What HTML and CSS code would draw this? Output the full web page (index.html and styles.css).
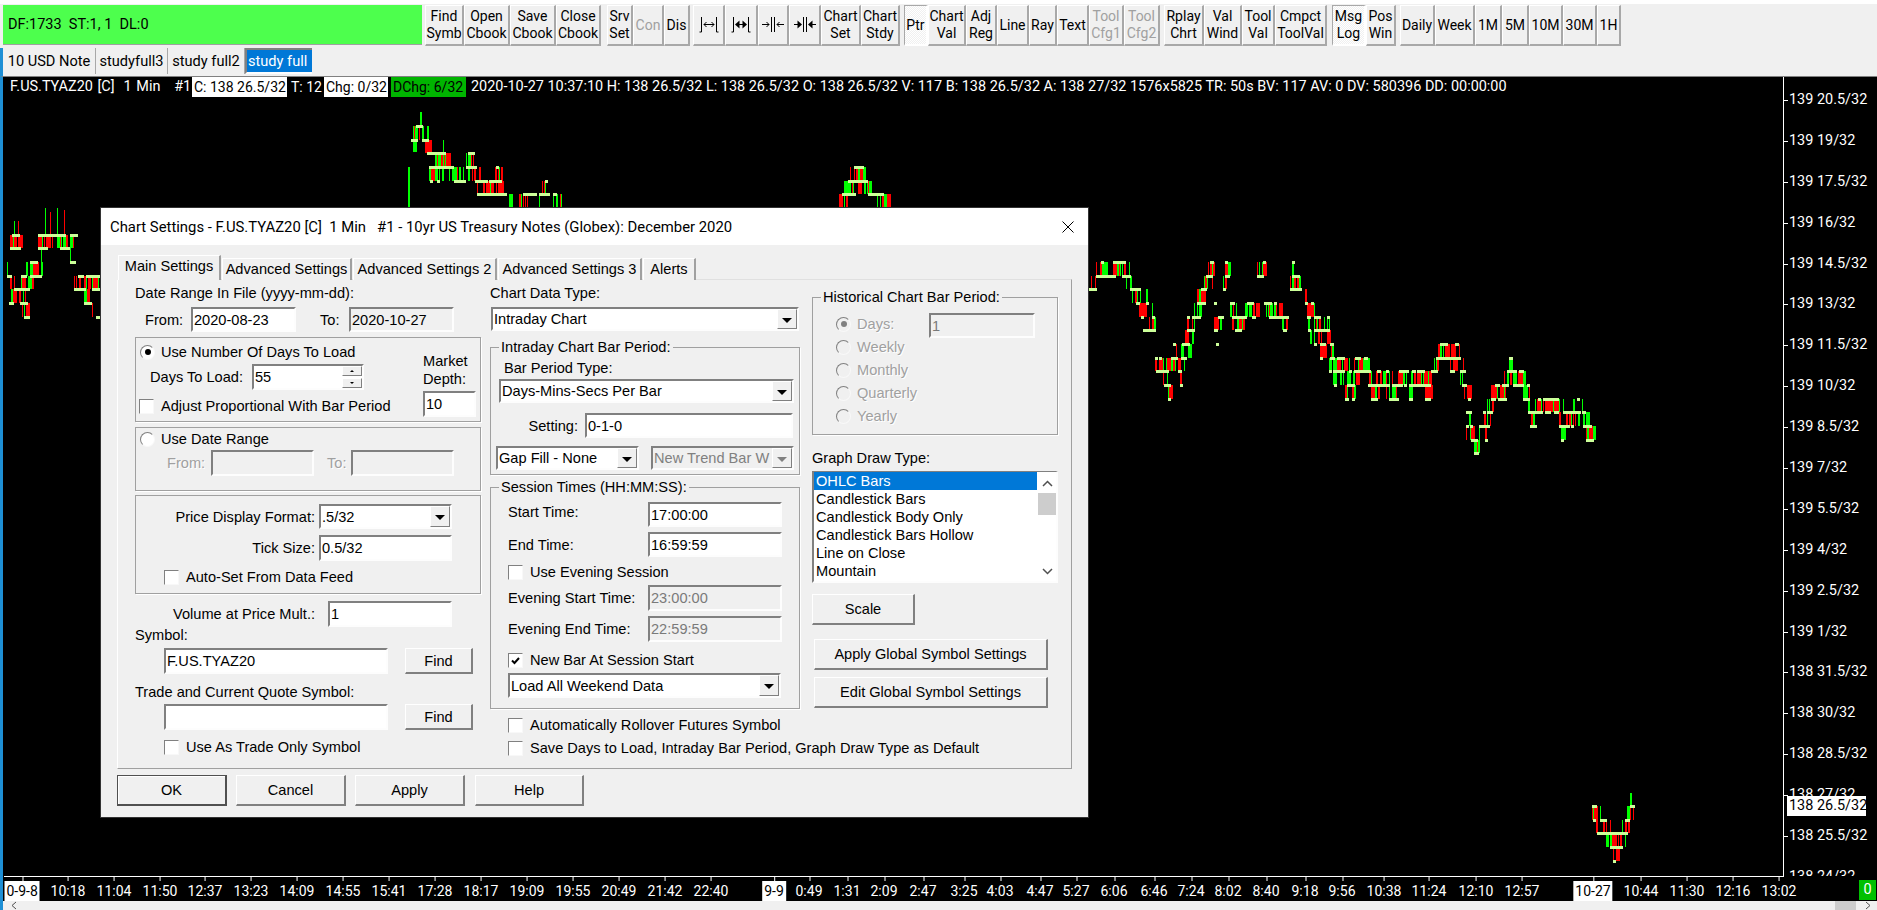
FILE: index.html
```html
<!DOCTYPE html>
<html lang="en">
<head>
<meta charset="utf-8">
<title>Chart Settings</title>
<link rel="stylesheet" href="styles.css">
</head>
<body>
<div class="app">
  <div class="top-strip"></div>
  <div class="toolbar">
    <div class="status-box">DF:1733&nbsp; ST:1, 1&nbsp; DL:0</div>
    <div class="tb-group g3">
      <div class="tb w39">Find<br>Symb</div><div class="tb w46">Open<br>Cbook</div><div class="tb w46">Save<br>Cbook</div><div class="tb w45">Close<br>Cbook</div>
    </div>
    <div class="tb-group g6">
      <div class="tb w26">Srv<br>Set</div><div class="tb w31 off">Con</div><div class="tb w26">Dis</div>
    </div>
    <div class="tb-group g3">
      <div class="tb w32"><svg class="ico" viewBox="0 0 24 20"><path d="M4.500 2V17M2.500 17H4.500M19.500 2V17M19.500 17H21.500M7 9.500H17M9.500 7L7 9.500L9.500 12M14.500 7L17 9.500L14.500 12"/></svg></div>
      <div class="tb w33"><svg class="ico" viewBox="0 0 24 20"><path d="M4.500 2V17M2.500 17H4.500M19.500 2V17M19.500 17H21.500M7 9.500H17"/><path class="fill" d="M6 9.500L10.500 5.500V13.500ZM18 9.500L13.500 5.500V13.500Z"/></svg></div>
      <div class="tb w31"><svg class="ico" viewBox="0 0 24 20"><path d="M10.500 2V17M13.500 2V17M1 9.500H8M23 9.500H16M5.500 7L8 9.500L5.500 12M18.500 7L16 9.500L18.500 12"/></svg></div>
      <div class="tb w32"><svg class="ico" viewBox="0 0 24 20"><path d="M10.500 2V17M13.500 2V17M1 9.500H8M23 9.500H16"/><path class="fill" d="M9 9.500L4.500 5.500V13.500ZM15 9.500L19.500 5.500V13.500Z"/></svg></div>
      <div class="tb w40">Chart<br>Set</div><div class="tb w39">Chart<br>Stdy</div>
    </div>
    <div class="tb-group g4">
      <div class="tb w24 down">Ptr</div><div class="tb w38">Chart<br>Val</div><div class="tb w31">Adj<br>Reg</div><div class="tb w32">Line</div><div class="tb w28">Ray</div><div class="tb w32">Text</div><div class="tb w35 off">Tool<br>Cfg1</div><div class="tb w36 off">Tool<br>Cfg2</div>
    </div>
    <div class="tb-group g4">
      <div class="tb w40">Rplay<br>Chrt</div><div class="tb w38">Val<br>Wind</div><div class="tb w33">Tool<br>Val</div><div class="tb w52">Cmpct<br>ToolVal</div>
    </div>
    <div class="tb-group g5">
      <div class="tb w34 down">Msg<br>Log</div><div class="tb w30">Pos<br>Win</div>
    </div>
    <div class="tb-group g4">
      <div class="tb w35">Daily</div><div class="tb w40">Week</div><div class="tb w27">1M</div><div class="tb w27">5M</div><div class="tb w34">10M</div><div class="tb w34">30M</div><div class="tb w24">1H</div>
    </div>
  </div>
  <div class="chart-tabs">
    <div class="ctab w93">10 USD Note</div><div class="ctab w72">studyfull3</div><div class="ctab w77">study full2</div><div class="ctab w67 sel">study full</div>
  </div>

  <div class="chart">
    <svg id="bars" class="bars" width="1873" height="825" viewBox="4 76 1873 825"></svg>

    <div class="head">
      <span class="h-name">F.US.TYAZ20 [C]&nbsp;&nbsp;1 Min&nbsp;&nbsp;&nbsp;#1</span>
      <span class="h-c">C: 138 26.5/32</span>
      <span class="h-t">T: 12</span>
      <span class="h-chg">Chg: 0/32</span>
      <span class="h-d">DChg: 6/32</span>
      <span class="h-rest">2020-10-27 10:37:10 H: 138 26.5/32 L: 138 26.5/32 O: 138 26.5/32 V: 117 B: 138 26.5/32 A: 138 27/32 1576x5825 TR: 50s BV: 117 AV: 0 DV: 580396 DD: 00:00:00</span>
    </div>

    <div class="price-axis">
      <div class="p">139 20.5/32</div><div class="p">139 19/32</div><div class="p">139 17.5/32</div><div class="p">139 16/32</div>
      <div class="p">139 14.5/32</div><div class="p">139 13/32</div><div class="p">139 11.5/32</div><div class="p">139 10/32</div>
      <div class="p">139 8.5/32</div><div class="p">139 7/32</div><div class="p">139 5.5/32</div><div class="p">139 4/32</div>
      <div class="p">139 2.5/32</div><div class="p">139 1/32</div><div class="p">138 31.5/32</div><div class="p">138 30/32</div>
      <div class="p">138 28.5/32</div><div class="p">138 27/32</div><div class="p">138 25.5/32</div><div class="p">138 24/32</div>
    </div>
    <div class="price-now">138 26.5/32</div>

    <div class="time-axis">
      <span class="t hl first" style="left:18px">0-9-8</span>
      <span class="t" style="left:64px">10:18</span><span class="t" style="left:110px">11:04</span><span class="t" style="left:156px">11:50</span><span class="t" style="left:201px">12:37</span><span class="t" style="left:247px">13:23</span><span class="t" style="left:293px">14:09</span><span class="t" style="left:339px">14:55</span><span class="t" style="left:385px">15:41</span><span class="t" style="left:431px">17:28</span><span class="t" style="left:477px">18:17</span><span class="t" style="left:523px">19:09</span><span class="t" style="left:569px">19:55</span><span class="t" style="left:615px">20:49</span><span class="t" style="left:661px">21:42</span><span class="t" style="left:707px">22:40</span>
      <span class="t hl" style="left:770px">9-9</span>
      <span class="t" style="left:805px">0:49</span><span class="t" style="left:843px">1:31</span><span class="t" style="left:880px">2:09</span><span class="t" style="left:919px">2:47</span><span class="t" style="left:960px">3:25</span><span class="t" style="left:996px">4:03</span><span class="t" style="left:1036px">4:47</span><span class="t" style="left:1072px">5:27</span><span class="t" style="left:1110px">6:06</span><span class="t" style="left:1150px">6:46</span><span class="t" style="left:1187px">7:24</span><span class="t" style="left:1224px">8:02</span><span class="t" style="left:1262px">8:40</span><span class="t" style="left:1301px">9:18</span><span class="t" style="left:1338px">9:56</span><span class="t" style="left:1380px">10:38</span><span class="t" style="left:1425px">11:24</span><span class="t" style="left:1472px">12:10</span><span class="t" style="left:1518px">12:57</span>
      <span class="t hl" style="left:1589px">10-27</span>
      <span class="t" style="left:1637px">10:44</span><span class="t" style="left:1683px">11:30</span><span class="t" style="left:1729px">12:16</span><span class="t" style="left:1775px">13:02</span>
    </div>
    <div class="counter">0</div>

    <div class="dialog">
      <div class="d-title">
        <span>Chart Settings - F.US.TYAZ20 [C]&nbsp; 1 Min&nbsp;&nbsp; #1 - 10yr US Treasury Notes (Globex): December 2020</span>
        <svg class="close" viewBox="0 0 12 12"><path d="M0.500 0.500L11.500 11.500M11.500 0.500L0.500 11.500"/></svg>
      </div>
      <div class="d-tabs">
        <div class="dtab active w103">Main Settings</div>
        <div class="dtab w130">Advanced Settings</div>
        <div class="dtab w144">Advanced Settings 2</div>
        <div class="dtab w144">Advanced Settings 3</div>
        <div class="dtab w53">Alerts</div>
      </div>
      <div class="page">
        <!-- left column -->
        <div class="col">
          <div class="lbl m5">Date Range In File (yyyy-mm-dd):</div>
          <div class="row m6 ml10">
            <span class="lw46">From:</span><div class="in w105 h25">2020-08-23</div>
            <span class="lw29 ml24">To:</span><div class="in dis-bg w105 h25">2020-10-27</div>
          </div>
          <div class="box m5 h85 split">
            <div class="box-main">
              <div class="opt m6 ml4"><i class="radio on"></i>Use Number Of Days To Load</div>
              <div class="row m4 ml14">
                <span class="lw97">Days To Load:</span>
                <div class="in w112 h26 ml5 spinwrap">55
                  <div class="spin"><b class="up"></b><b class="dn"></b></div>
                </div>
              </div>
              <div class="opt m8 ml3"><i class="check"></i>Adjust Proportional With Bar Period</div>
            </div>
            <div class="depth">
              <div class="depth-t">Market<br>Depth:</div>
              <div class="in w53 h26 m3">10</div>
            </div>
          </div>
          <div class="box m5 h64">
            <div class="opt m3 ml4"><i class="radio"></i>Use Date Range</div>
            <div class="row m3 ml31 mute">
              <span class="lw44">From:</span><div class="in dis-bg w103 h26"></div>
              <span class="lw24 ml13">To:</span><div class="in dis-bg w103 h26"></div>
            </div>
          </div>
          <div class="box m4 h99">
            <div class="row m8">
              <span class="lw179 tr">Price Display Format:</span>
              <div class="sel w133 h25 ml4">.5/32<b class="arrow"></b></div>
            </div>
            <div class="row m6">
              <span class="lw179 tr">Tick Size:</span>
              <div class="in w133 h26 ml4">0.5/32</div>
            </div>
            <div class="opt m8 ml28"><i class="check"></i>Auto-Set From Data Feed</div>
          </div>
          <div class="row m7">
            <span class="lw180 tr">Volume at Price Mult.:</span>
            <div class="in w124 h26 ml13">1</div>
          </div>
          <div class="lbl">Symbol:</div>
          <div class="row m5 ml29">
            <div class="in w224 h26">F.US.TYAZ20</div>
            <div class="btn w68 h26 ml17">Find</div>
          </div>
          <div class="lbl m10">Trade and Current Quote Symbol:</div>
          <div class="row m4 ml29">
            <div class="in w224 h26"></div>
            <div class="btn w68 h26 ml17">Find</div>
          </div>
          <div class="opt m9 ml29"><i class="check"></i>Use As Trade Only Symbol</div>
        </div>

        <!-- middle column -->
        <div class="col">
          <div class="lbl m5">Chart Data Type:</div>
          <div class="sel w308 h24 m6 ml1">Intraday Chart<b class="arrow"></b></div>
          <fieldset class="group w310 h136 m8">
            <legend>Intraday Chart Bar Period:</legend>
            <div class="lbl m5 ml13">Bar Period Type:</div>
            <div class="sel w295 h24 m3 ml8">Days-Mins-Secs Per Bar<b class="arrow"></b></div>
            <div class="row m10">
              <span class="lw87 tr">Setting:</span>
              <div class="in w208 h25 ml7">0-1-0</div>
            </div>
            <div class="row m8 ml5">
              <div class="sel w143 h24">Gap Fill - None<b class="arrow"></b></div>
              <div class="sel dis w143 h24 ml12">New Trend Bar W<b class="arrow"></b></div>
            </div>
          </fieldset>
          <fieldset class="group w310 h230 m4">
            <legend>Session Times (HH:MM:SS):</legend>
            <div class="row m7 ml17"><span class="lw140 nudge">Start Time:</span><div class="in w134 h25">17:00:00</div></div>
            <div class="row m5 ml17"><span class="lw140">End Time:</span><div class="in w134 h25">16:59:59</div></div>
            <div class="opt m7 ml17"><i class="check"></i>Use Evening Session</div>
            <div class="row m5 ml17"><span class="lw140">Evening Start Time:</span><div class="in dis-bg dim w134 h26">23:00:00</div></div>
            <div class="row m5 ml17"><span class="lw140">Evening End Time:</span><div class="in dis-bg dim w134 h26">22:59:59</div></div>
            <div class="opt m10 ml17"><i class="check"><svg viewBox="0 0 11 11"><path d="M2 5.500L4.500 8L9 3"/></svg></i>New Bar At Session Start</div>
            <div class="sel w273 h25 m5 ml17">Load All Weekend Data<b class="arrow"></b></div>
          </fieldset>
          <div class="opt m8 ml18"><i class="check"></i>Automatically Rollover Futures Symbol</div>
          <div class="opt m7 ml18"><i class="check"></i>Save Days to Load, Intraday Bar Period, Graph Draw Type as Default</div>
        </div>

        <!-- right column -->
        <div class="col">
          <fieldset class="group w246 h146 m9">
            <legend>Historical Chart Bar Period:</legend>
            <div class="hist">
              <div class="hist-opts">
                <div class="opt mute"><i class="radio on"></i>Days:</div>
                <div class="opt mute"><i class="radio"></i>Weekly</div>
                <div class="opt mute"><i class="radio"></i>Monthly</div>
                <div class="opt mute"><i class="radio"></i>Quarterly</div>
                <div class="opt mute"><i class="radio"></i>Yearly</div>
              </div>
              <div class="in dis-bg dim w106 h25 m8">1</div>
            </div>
          </fieldset>
          <div class="lbl m15">Graph Draw Type:</div>
          <div class="list m5">
            <div class="items">
              <div class="item cur">OHLC Bars</div>
              <div class="item">Candlestick Bars</div>
              <div class="item">Candlestick Body Only</div>
              <div class="item">Candlestick Bars Hollow</div>
              <div class="item">Line on Close</div>
              <div class="item">Mountain</div>
            </div>
            <div class="vbar">
              <svg class="chev" viewBox="0 0 11 7"><path d="M1 6L5.500 1.500L10 6"/></svg>
              <div class="thumb"></div>
              <svg class="chev low" viewBox="0 0 11 7"><path d="M1 1L5.500 5.500L10 1"/></svg>
            </div>
          </div>
          <div class="btn w103 h31 m11">Scale</div>
          <div class="btn w234 h31 m14 ml2">Apply Global Symbol Settings</div>
          <div class="btn w234 h31 m7 ml2">Edit Global Symbol Settings</div>
        </div>
      </div>
      <div class="d-foot">
        <div class="btn default w110 h31">OK</div>
        <div class="btn w110 h31">Cancel</div>
        <div class="btn w110 h31">Apply</div>
        <div class="btn w109 h31 ml1">Help</div>
      </div>
    </div>
  </div>

  <div class="statusbar">
    <svg class="sb-chev" viewBox="0 0 6 9"><path d="M5 1L1 4.500L5 8"/></svg>
    <div class="sb-thumb"></div>
    <svg class="sb-chev" viewBox="0 0 6 9"><path d="M1 1L5 4.500L1 8"/></svg>
  </div>
</div>
<script src="chart.js"></script>
</body>
</html>
```

FILE: styles.css
```css
* { box-sizing: border-box; }
html, body { margin: 0; padding: 0; height: 100%; overflow: hidden; background: #f0f0f0; }
body { font: 14.600px/16px "Liberation Sans", Arial, sans-serif; color: #000; }

.app { width: 1877px; height: 910px; display: flex; flex-direction: column; overflow: hidden; }
.top-strip { height: 4px; background: #fff; flex: none; }

/* main toolbar */
.toolbar { height: 44px; flex: none; display: flex; padding: 1px 0 0 3px; background: #f0f0f0; font: 14px/17px Roboto, sans-serif; }
.status-box { width: 419px; height: 40px; background: #4dff4d; border-bottom: 1px solid #a0a0a0; display: flex; align-items: center; padding-left: 5px; font-size: 14.500px; }
.tb-group { display: flex; }
.g3 { margin-left: 3px; } .g4 { margin-left: 4px; } .g5 { margin-left: 5px; } .g6 { margin-left: 6px; }
.tb { height: 41px; display: flex; align-items: center; justify-content: center; text-align: center; background: #f0f0f0; border-right: 2px solid #a8a8a8; border-bottom: 2px solid #a8a8a8; border-left: 1px solid #fff; border-top: 1px solid #fff; }
.tb.off { color: #a0a0a0; }
.tb.down { background: repeating-conic-gradient(#fff 0 25%, #f0f0f0 0 50%) 0 0 / 2px 2px; border-color: #a8a8a8 #fff #fff #a8a8a8; }
.ico { width: 24px; height: 20px; fill: none; stroke: #000; stroke-width: 1; }
.ico .fill { fill: #000; stroke: none; }

/* chart tabs */
.chart-tabs { height: 28px; flex: none; display: flex; padding: 0 0 2px; background: #f0f0f0; border-left: 3px solid #1e8fd5; font: 14.600px/26px Roboto, sans-serif; }
.ctab { height: 26px; text-align: center; border-right: 1px solid #a8a8a8; white-space: nowrap; }
.ctab.sel { background: #0078d7; color: #fff; border-right: 0; }

/* chart canvas */
.chart { position: relative; height: 825px; flex: none; background: #000; border-left: 3px solid #1e8fd5; border-top: 1px solid #808080; color: #fff; font: 14.450px/20px Roboto, sans-serif; }
.bars { position: absolute; left: 1px; top: -1px; shape-rendering: crispEdges; }
.head { position: absolute; left: 7px; top: 0; display: flex; white-space: pre; height: 20px; }
.h-name { width: 182px; word-spacing: 1px; }
.h-c { width: 95px; padding-left: 2px; background: #fff; color: #000; font-size: 14px; }
.h-t { margin-left: 4px; width: 33px; font-size: 14px; }
.h-chg { width: 64px; padding-left: 2px; background: #fff; color: #000; font-size: 14px; }
.h-d { margin-left: 3px; width: 75px; padding-left: 2px; background: #00b400; color: #000; font-size: 14px; }
.h-rest { margin-left: 5px; }

.price-axis { position: absolute; left: 1780px; top: 0; width: 94px; height: 799px; border-left: 1px solid #fff; overflow: hidden; padding-top: 3px; }
.p { height: 40.900px; line-height: 40.900px; padding-left: 5px; position: relative; white-space: nowrap; }
.p::before { content: ""; position: absolute; left: 0; top: 20px; width: 4px; height: 1px; background: #fff; }
.price-now { position: absolute; left: 1784px; top: 719px; width: 79px; height: 20px; padding-left: 2px; background: #fff; color: #000; white-space: nowrap; }

.time-axis { position: absolute; left: 1px; top: 799px; width: 1780px; height: 25px; border-top: 1px solid #fff; font-size: 14px; }
.t { position: absolute; top: 4px; transform: translateX(-50%); white-space: nowrap; height: 20px; }
.t::before { content: ""; position: absolute; left: 50%; top: -4px; width: 1px; height: 4px; background: #fff; }
.t.hl { background: #fff; color: #000; padding: 0 2px; }
.t.first { width: 35px; }
.counter { position: absolute; left: 1856px; top: 803px; width: 17px; height: 20px; text-align: center; background: #00c000; color: #fff; }

/* dialog */
.dialog { position: absolute; left: 98px; top: 131px; width: 987px; height: 609px; background: #f0f0f0; color: #000; display: flex; flex-direction: column; font: 14.600px/16px "Liberation Sans", Arial, sans-serif; box-shadow: 0 0 0 1px #333; }
.d-title { height: 37px; flex: none; background: #fff; display: flex; align-items: center; justify-content: space-between; padding: 0 14px 0 9px; font: 14.850px/16px Roboto, sans-serif; white-space: pre; }
.close { width: 12px; height: 12px; fill: none; stroke: #000; stroke-width: 1; }
.d-tabs { display: flex; align-items: flex-end; height: 25px; margin: 10px 0 -1px 17px; position: relative; z-index: 1; }
.dtab { height: 22px; margin-right: 1px; line-height: 21px; text-align: center; background: #f0f0f0; border-right: 2px solid #a0a0a0; border-top: 1px solid #fff; border-left: 1px solid #fff; white-space: nowrap; }
.dtab.active { height: 25px; line-height: 21px; }
.page { margin-left: 16px; width: 955px; height: 490px; flex: none; display: grid; grid-template-columns: 355px 322px 246px; padding-left: 17px; border: 1px solid; border-color: #e0e0e0 #a0a0a0 #a0a0a0 #fff; }
.col { min-width: 0; }
.d-foot { display: flex; gap: 9px; margin: 6px 0 0 16px; }

/* generic rows */
.row { display: flex; align-items: center; white-space: nowrap; }
.lbl { height: 16px; white-space: nowrap; }
.opt { height: 16px; display: flex; align-items: center; white-space: nowrap; }
.mute, .mute span { color: #a0a0a0; text-shadow: 1px 1px 0 #fff; }
.tr { text-align: right; }
.nudge { margin-bottom: 6px; }

/* widgets */
.in, .sel { position: relative; flex: none; display: flex; align-items: center; background: #fff; border: 2px solid; border-color: #808080 #fdfdfd #fdfdfd #808080; padding-left: 1px; white-space: nowrap; overflow: hidden; text-shadow: none; }
.dis-bg { background: #f0f0f0; }
.dim { color: #7a7a7a; }
.sel.dis { background: #f0f0f0; color: #808080; }
.arrow { position: absolute; right: 0; top: 0; bottom: 0; width: 20px; background: #f0f0f0; border: 1px solid; border-color: #fff #808080 #808080 #fff; }
.arrow::after { content: ""; position: absolute; left: 4px; top: 8px; border: 5px solid transparent; border-bottom: 0; border-top: 5px solid #000; }
.sel.dis .arrow::after { border-top-color: #808080; }
.spinwrap { justify-content: space-between; }
.spin { width: 20px; display: flex; flex-direction: column; gap: 2px; }
.spin b { height: 10px; position: relative; background: #f0f0f0; border: 1px solid; border-color: #fff #808080 #808080 #fff; }
.spin b::after { content: ""; position: absolute; left: 7px; top: 3px; border: 2px solid transparent; }
.spin .up::after { border-top: 0; border-bottom: 2px solid #000; }
.spin .dn::after { border-bottom: 0; border-top: 2px solid #000; }
.btn { flex: none; display: flex; align-items: center; justify-content: center; background: #f0f0f0; border: solid; border-width: 1px 2px 2px 1px; border-color: #fff #808080 #808080 #fff; white-space: nowrap; }
.btn.default { border-color: #505050; box-shadow: inset 1px 1px 0 #fff; }
.radio, .check { flex: none; width: 15px; height: 15px; margin-right: 6px; background: #fff; border: 1px solid; border-color: #808080 #f8f8f8 #f8f8f8 #808080; display: flex; align-items: center; justify-content: center; }
.check { margin-right: 7px; }
.check svg { width: 11px; height: 11px; fill: none; stroke: #000; stroke-width: 2; }
.radio { border-radius: 50%; }
.radio.on::after { content: ""; width: 6px; height: 6px; border-radius: 50%; background: #000; }
.mute .radio { background: #f0f0f0; }
.mute .radio.on::after { background: #808080; }

/* boxes */
.box { width: 346px; border: 1px solid #a0a0a0; box-shadow: 1px 1px 0 #fff; }
.split { display: flex; }
.box-main { width: 287px; }
.depth { padding-top: 14px; }
.depth-t { line-height: 18px; height: 36px; white-space: nowrap; }
.group { margin-left: 0; margin-right: 0; padding: 0; border: 1px solid #a0a0a0; box-shadow: 1px 1px 0 #fff; min-width: 0; }
.group legend { margin-left: 8px; padding: 0 2px; height: 16px; line-height: 16px; }
.hist { display: flex; }
.hist-opts { width: 116px; padding: 11px 0 0 23px; display: flex; flex-direction: column; gap: 7px; }

/* list */
.list { width: 246px; height: 112px; display: flex; background: #fff; border: solid; border-width: 1px 2px 2px; border-color: #808080 #fdfdfd #fdfdfd #808080; }
.items { width: 223px; flex: none; }
.item { height: 18px; line-height: 18px; padding-left: 2px; white-space: nowrap; }
.item.cur { background: #0078d7; color: #fff; }
.vbar { flex: 1; margin-left: 1px; position: relative; display: flex; flex-direction: column; align-items: center; }
.chev { width: 11px; height: 7px; fill: none; stroke: #505050; stroke-width: 1.500; margin-top: 8px; }
.chev.low { margin-top: auto; margin-bottom: 6px; }
.thumb { width: 100%; height: 22px; background: #cdcdcd; margin-top: 6px; }

/* status strip */
.statusbar { height: 9px; flex: 1; display: flex; align-items: center; padding-left: 8px; background: #f0f0f0; border-left: 3px solid #1e8fd5; }
.sb-chev { width: 6px; height: 9px; fill: none; stroke: #505050; }
.sb-thumb { width: 21px; height: 9px; background: #cdcdcd; margin: 0 9px 0 auto; }
.statusbar .sb-chev:last-child { margin-right: 6px; }

/* sizes */
.w24{width:24px}.w26{width:26px}.w27{width:27px}.w28{width:28px}.w30{width:30px}.w31{width:31px}.w32{width:32px}.w33{width:33px}.w34{width:34px}.w35{width:35px}.w36{width:36px}.w38{width:38px}.w39{width:39px}.w40{width:40px}.w45{width:45px}.w46{width:46px}.w52{width:52px}.w53{width:53px}.w67{width:67px}.w68{width:68px}.w72{width:72px}.w77{width:77px}.w93{width:93px}.w103{width:103px}.w105{width:105px}.w106{width:106px}.w109{width:109px}.w110{width:110px}.w112{width:112px}.w124{width:124px}.w130{width:130px}.w133{width:133px}.w134{width:134px}.w143{width:143px}.w144{width:144px}.w208{width:208px}.w224{width:224px}.w234{width:234px}.w246{width:246px}.w273{width:273px}.w295{width:295px}.w308{width:308px}.w310{width:310px}
.h24{height:24px}.h25{height:25px}.h26{height:26px}.h31{height:31px}.h64{height:64px}.h85{height:85px}.h99{height:99px}.h136{height:136px}.h146{height:146px}.h230{height:230px}
.m3{margin-top:3px}.m4{margin-top:4px}.m5{margin-top:5px}.m6{margin-top:6px}.m7{margin-top:7px}.m8{margin-top:8px}.m9{margin-top:9px}.m10{margin-top:10px}.m11{margin-top:11px}.m14{margin-top:14px}.m15{margin-top:15px}
.ml1{margin-left:1px}.ml2{margin-left:2px}.ml3{margin-left:3px}.ml4{margin-left:4px}.ml5{margin-left:5px}.ml7{margin-left:7px}.ml8{margin-left:8px}.ml10{margin-left:10px}.ml12{margin-left:12px}.ml13{margin-left:13px}.ml14{margin-left:14px}.ml17{margin-left:17px}.ml18{margin-left:18px}.ml24{margin-left:24px}.ml28{margin-left:28px}.ml29{margin-left:29px}.ml31{margin-left:31px}
.lw24{width:24px}.lw29{width:29px}.lw44{width:44px}.lw46{width:46px}.lw87{width:87px}.lw97{width:97px}.lw140{width:140px}.lw179{width:179px}.lw180{width:180px}
```

FILE: chart.js
```js
(function () {
  var svg = document.getElementById('bars');
  var seed = 17;
  function rnd() { seed = (seed * 16807) % 2147483647; return seed / 2147483647; }

  // Each section: plateaus [x1, x2, level], a mapping to page pixels.
  var STEP = 13.67;
  var right = {
    fx: function (v) { return 1080 + v / 2.904; }, y0: 262,
    p: [[25,50,2],[60,70,0],[46,105,1],[96,133,0],[122,148,1],[145,178,2],[163,173,3],[178,185,4],[192,196,3],[183,220,5],[210,217,4],[218,222,7],[229,237,7],[222,258,8],[245,265,9],[256,260,10],[265,285,7],[270,280,6],[285,295,8],[290,295,9],[295,320,6],[293,310,7],[310,335,5],[311,316,4],[325,350,4],[340,365,3],[350,368,2],[365,385,1],[378,390,0],[390,398,3],[390,400,5],[395,400,6],[400,404,4],[408,417,4],[415,420,2],[420,435,1],[421,429,0],[437,450,3],[440,485,4],[450,470,5],[485,505,3],[500,510,4],[515,533,1],[531,536,0],[535,558,3],[550,578,4],[563,568,3],[578,606,4],[590,600,5],[610,645,2],[615,640,1],[616,620,0],[653,662,3],[660,672,4],[662,672,5],[671,676,3],[680,725,5],[680,700,4],[716,722,4],[697,714,6],[680,684,6],[725,737,6],[725,740,7],[697,702,7],[745,770,7],[723,728,8],[735,770,8],[738,745,9],[770,780,10],[775,798,9],[790,798,10],[782,786,8],[800,815,7],[795,845,8],[825,835,7],[835,900,9],[845,865,10],[862,873,8],[888,893,8],[897,925,10],[905,937,9],[925,955,8],[942,946,9],[955,1020,9],[955,966,10],[965,975,8],[980,1003,8],[1003,1018,10],[1020,1040,8],[1035,1105,7],[1045,1070,6],[1090,1100,6],[1075,1090,8],[1103,1120,8],[1110,1123,9],[1128,1134,10],[1122,1138,11],[1122,1130,12],[1133,1138,12],[1135,1155,13],[1145,1160,14],[1160,1190,12],[1170,1175,11],[1183,1200,11],[1176,1181,13],[1194,1207,10],[1206,1220,9],[1214,1240,10],[1226,1245,9],[1240,1268,8],[1247,1256,7],[1258,1288,9],[1276,1288,8],[1287,1306,10],[1298,1303,9],[1302,1330,11],[1307,1328,12],[1330,1338,10],[1318,1345,11],[1345,1390,10],[1350,1356,11],[1360,1367,11],[1376,1392,11],[1392,1422,12],[1398,1404,13],[1403,1455,11],[1426,1436,12],[1444,1448,10],[1458,1468,11],[1462,1486,12],[1470,1492,13]]
  };
  var left = {
    fx: function (v) { return v; }, y0: 262,
    p: [[7,12,1],[9,14,3],[12,20,-2],[10,21,-1],[14,30,2],[20,28,3],[24,30,4],[21,27,1],[30,38,0],[30,37,1],[36,42,1],[38,48,-1],[38,66,-2],[60,70,-1],[70,78,-2],[70,76,0],[78,84,1],[74,86,2],[86,101,1],[84,92,3],[92,101,2],[96,101,4]]
  };
  var top1 = {
    fx: function (v) { return v; }, y0: 126,
    p: [[416,423,0],[411,418,1],[422,429,1],[427,446,2],[429,441,3],[439,454,3],[430,432,4],[437,439,4],[454,466,4],[468,475,2],[466,477,3],[475,488,4],[477,493,5],[489,502,4],[496,499,3],[493,507,5],[507,523,6],[523,537,5],[539,550,5],[545,548,4],[553,557,5],[557,570,6]]
  };
  var top2 = {
    fx: function (v) { return v; }, y0: 126,
    p: [[836,846,6],[842,856,5],[848,868,4],[854,864,3],[868,884,5],[880,896,6]]
  };
  var bottom = {
    fx: function (v) { return 1500 + v / 3; }, y0: 806,
    p: [[275,290,0],[278,288,1],[290,335,2],[300,320,1],[335,385,2],[330,370,3],[338,344,4],[375,390,1],[390,405,0]]
  };

  var rects = { g: '', r: '', p: '' };
  function add(c, x, y, w, h) {
    if (h < 0) { y += h; h = -h; }
    rects[c] += 'M' + x.toFixed(1) + ' ' + y.toFixed(1) + 'h' + w + 'v' + h.toFixed(1) + 'h' + (-w) + 'z';
  }
  function draw(s) {
    s.p.forEach(function (q) {
      var a = s.fx(q[0]), b = s.fx(q[1]), k = q[2];
      var y = s.y0 + k * STEP;
      for (var x = a; x < b; x += 1.500 + rnd() * 2) {
        var neighbours = s.p.filter(function (o) {
          return Math.abs(o[2] - k) === 1 && s.fx(o[0]) - 5 < x && s.fx(o[1]) + 5 > x;
        });
        if (!neighbours.length && rnd() > 0.2) continue;
        if (rnd() > 0.85) continue;
        var other = neighbours.length ? neighbours[Math.floor(rnd() * neighbours.length)][2] : k + (rnd() < 0.5 ? 1 : -1);
        var r = rnd();
        add(rnd() < 0.5 ? 'g' : 'r', Math.round(x), y, r < 0.22 ? 4 : (r < 0.55 ? 2 : 1), (other - k) * STEP);
      }
    });
    s.p.forEach(function (q) {
      var a = Math.round(s.fx(q[0])), b = Math.round(s.fx(q[1]));
      add('p', a, s.y0 + q[2] * STEP - 1, Math.max(b - a, 3), 3);
    });
  }
  [left, top1, top2, right, bottom].forEach(draw);

  // Individual spikes seen in the reference.
  add('g', 408, 167, 2, 42); add('g', 413, 126, 4, 26); add('g', 420, 112, 2, 14); add('g', 443, 140, 1, 13);
  add('g', 14, 221, 1, 14); add('r', 18, 221, 1, 14); add('g', 45, 208, 1, 27); add('r', 50, 212, 1, 23); add('g', 57, 208, 1, 27); add('r', 64, 210, 1, 25);
  add('g', 1630, 793, 2, 13); add('g', 1628, 806, 2, 14); add('r', 1613, 848, 1, 13);

  var NS = 'http://www.w3.org/2000/svg';
  [['g', '#00ff00'], ['r', '#ff0000'], ['p', '#ccff99']].forEach(function (e) {
    var path = document.createElementNS(NS, 'path');
    path.setAttribute('d', rects[e[0]]);
    path.setAttribute('fill', e[1]);
    svg.appendChild(path);
  });
})();
```
